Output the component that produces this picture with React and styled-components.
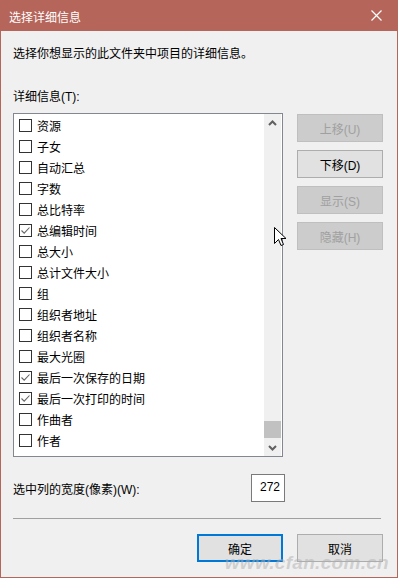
import React from 'react'
import styled, { createGlobalStyle } from 'styled-components'

const GlobalStyle = createGlobalStyle`
  html, body { margin: 0; padding: 0; background: #f0f0f0; }
  body { font-family: "Liberation Sans", "Noto Sans CJK SC", sans-serif; }
`

const items = [
  ['资源', false],
  ['子女', false],
  ['自动汇总', false],
  ['字数', false],
  ['总比特率', false],
  ['总编辑时间', true],
  ['总大小', false],
  ['总计文件大小', false],
  ['组', false],
  ['组织者地址', false],
  ['组织者名称', false],
  ['最大光圈', false],
  ['最后一次保存的日期', true],
  ['最后一次打印的时间', true],
  ['作曲者', false],
  ['作者', false],
]

const App = () => {
  return (
    <>
      <GlobalStyle />
      <Window>
        <TitleBar>
          <Title>选择详细信息</Title>
          <Close>
            <svg width="11" height="11" viewBox="0 0 11 11">
              <path d="M0.5 0.5 L10.5 10.5 M10.5 0.5 L0.5 10.5" stroke="#fff" strokeWidth="1.2" />
            </svg>
          </Close>
        </TitleBar>
        <Body>
          <Desc>选择你想显示的此文件夹中项目的详细信息。</Desc>
          <Label>详细信息(T):</Label>
          <Middle>
            <ListBox>
              <Rows>
                {items.map(([name, checked]) => (
                  <Row key={name}>
                    <Check>
                      {checked && (
                        <svg width="11" height="11" viewBox="0 0 11 11">
                          <path d="M1.5 5.5 L4.2 8.2 L9.5 2.5" fill="none" stroke="#666" strokeWidth="1.1" />
                        </svg>
                      )}
                    </Check>
                    <span>{name}</span>
                  </Row>
                ))}
              </Rows>
              <ScrollBar>
                <Arrow>
                  <svg width="9" height="6" viewBox="0 0 9 6">
                    <path d="M1 5 L4.5 1.5 L8 5" fill="none" stroke="#606060" strokeWidth="2" />
                  </svg>
                </Arrow>
                <Track>
                  <Thumb />
                </Track>
                <Arrow>
                  <svg width="9" height="6" viewBox="0 0 9 6">
                    <path d="M1 1 L4.5 4.5 L8 1" fill="none" stroke="#606060" strokeWidth="2" />
                  </svg>
                </Arrow>
              </ScrollBar>
            </ListBox>
            <SideButtons>
              <Button disabled>上移(U)</Button>
              <Button>下移(D)</Button>
              <Button disabled>显示(S)</Button>
              <Button disabled>隐藏(H)</Button>
            </SideButtons>
            <Cursor>
              <svg width="13" height="20" viewBox="0 0 13 20">
                <path d="M0.5 0.5 L0.5 16.5 L4.5 12.5 L7 18.5 L9.5 17.5 L7 11.5 L12 11.5 Z" fill="#fff" stroke="#000" strokeWidth="1" />
              </svg>
            </Cursor>
          </Middle>
          <WidthRow>
            <span>选中列的宽度(像素)(W):</span>
            <WidthInput>272</WidthInput>
          </WidthRow>
          <Separator />
          <Footer>
            <Button primary>确定</Button>
            <Button>取消</Button>
            <Watermark>www.cfan.com.cn</Watermark>
          </Footer>
        </Body>
      </Window>
    </>
  )
}

export default App

const Window = styled.div`
  width: 398px;
  height: 578px;
  box-sizing: border-box;
  border: 1px solid #b5655a;
  border-top: none;
  background: #f0f0f0;
  display: flex;
  flex-direction: column;
  color: #000;
  font-size: 12px;
`
const TitleBar = styled.div`
  height: 31px;
  margin: 0 -1px;
  background: #b5655a;
  display: flex;
  align-items: center;
  justify-content: space-between;
  padding: 0 16px 0 9px;
  flex-shrink: 0;
`
const Title = styled.div`
  color: #fff;
  font-size: 12px;
  padding-top: 1px;
`
const Close = styled.div`
  display: flex;
  align-items: center;
  padding-bottom: 1px;
`
const Body = styled.div`
  flex: 1;
  display: flex;
  flex-direction: column;
  padding: 0 14px 0 12px;
`
const Desc = styled.div`
  margin-top: 15px;
  height: 16px;
  line-height: 16px;
`
const Label = styled.div`
  margin-top: 27px;
  height: 16px;
  line-height: 16px;
`
const Middle = styled.div`
  margin-top: 8px;
  display: flex;
  gap: 14px;
  position: relative;
`
const ListBox = styled.div`
  width: 271px;
  height: 344px;
  box-sizing: border-box;
  border: 1px solid #828790;
  background: #fff;
  display: flex;
  justify-content: space-between;
  overflow: hidden;
`
const Rows = styled.div`
  display: flex;
  flex-direction: column;
  padding-left: 5px;
  padding-top: 1px;
`
const Row = styled.div`
  height: 21px;
  display: flex;
  align-items: center;
  gap: 5px;
  white-space: nowrap;
`
const Check = styled.div`
  width: 13px;
  height: 13px;
  box-sizing: border-box;
  border: 1px solid #333;
  background: #fff;
  display: flex;
  align-items: center;
  justify-content: center;
`
const ScrollBar = styled.div`
  width: 17px;
  background: #f0f0f0;
  display: flex;
  flex-direction: column;
  margin-right: 1px;
`
const Arrow = styled.div`
  height: 17px;
  display: flex;
  align-items: center;
  justify-content: center;
`
const Track = styled.div`
  flex: 1;
  display: flex;
  flex-direction: column;
  justify-content: flex-end;
`
const Thumb = styled.div`
  height: 17px;
  background: #c1c1c1;
  margin-bottom: 1px;
`
const SideButtons = styled.div`
  display: flex;
  flex-direction: column;
  gap: 8px;
  padding-top: 1px;
`
const Button = styled.div`
  width: 86px;
  height: 28px;
  box-sizing: border-box;
  display: flex;
  align-items: center;
  justify-content: center;
  border: ${({ primary }) => (primary ? '2px solid #0078d7' : '1px solid #adadad')};
  background: ${({ disabled }) => (disabled ? '#cccccc' : '#e1e1e1')};
  border-color: ${({ disabled, primary }) => (primary ? '#0078d7' : disabled ? '#bfbfbf' : '#adadad')};
  color: ${({ disabled }) => (disabled ? '#a0a0a0' : '#000')};
  font-size: 12px;
`
const Cursor = styled.div`
  position: absolute;
  left: 261px;
  top: 114px;
  line-height: 0;
`
const WidthRow = styled.div`
  margin-top: 17px;
  display: flex;
  align-items: center;
  justify-content: space-between;
  width: 272px;
`
const WidthInput = styled.div`
  width: 34px;
  height: 28px;
  box-sizing: border-box;
  border: 1px solid #7a7a7a;
  background: #fff;
  display: flex;
  align-items: flex-start;
  justify-content: flex-end;
  padding: 5px 4px 0 0;
  font-size: 12px;
`
const Separator = styled.div`
  margin-top: 16px;
  height: 1px;
  background: #a0a0a0;
  width: 368px;
`
const Footer = styled.div`
  margin-top: 15px;
  display: flex;
  justify-content: flex-end;
  gap: 14px;
  position: relative;
`
const Watermark = styled.div`
  position: absolute;
  right: -6px;
  top: 18px;
  font-size: 19px;
  font-style: italic;
  font-weight: bold;
  color: rgba(175, 175, 175, 0.5);
  letter-spacing: 0.3px;
  pointer-events: none;
`
